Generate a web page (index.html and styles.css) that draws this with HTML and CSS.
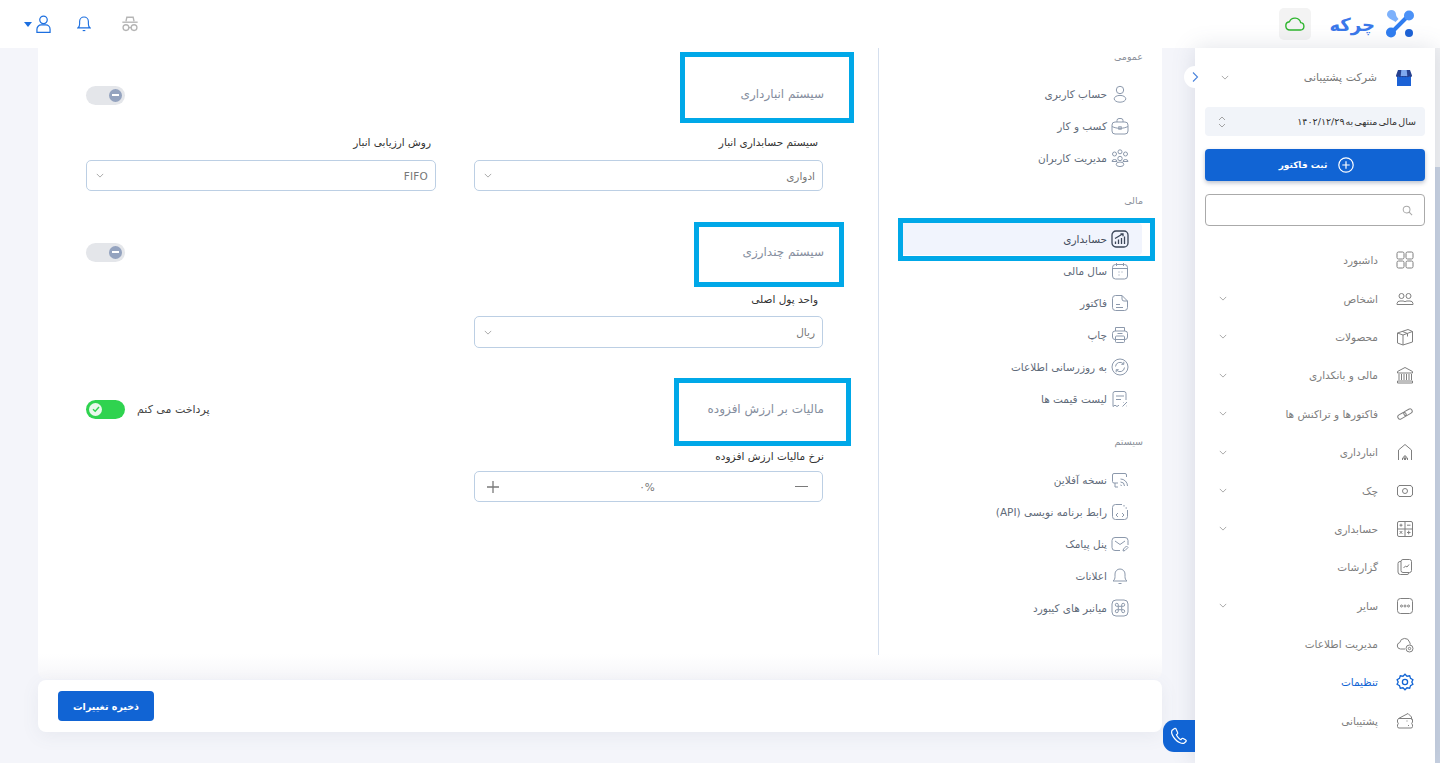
FILE: index.html
```html
<!DOCTYPE html>
<html lang="fa" dir="rtl">
<head>
<meta charset="utf-8">
<title>تنظیمات</title>
<link rel="stylesheet" href="styles.css">
</head>
<body>
<header class="topbar">
  <div class="brand-group">
    <svg class="logo" viewBox="0 0 28 28"><path d="M23 5 5 23" stroke="#2f7df0" stroke-width="4" stroke-linecap="round" fill="none"/><circle cx="23" cy="5.500" r="5" fill="#4c92f7"/><circle cx="5" cy="22.500" r="5" fill="#2f7df0"/><path d="M1 4.500a4.500 4.500 0 0 1 9 0c0 2 1.500 3 2.500 4.500l-3 3C6 9.500 1 8 1 4.500z" fill="#7db1fb"/><circle cx="23" cy="23" r="4" fill="#1c62d6"/></svg>
    <span class="wordmark">چرکه</span>
    <button class="cloud-btn"><svg viewBox="0 0 24 24" class="cloud-icon"><path d="M6.500 18.500a4.500 4.500 0 0 1-.6-8.960 6.500 6.500 0 0 1 12.300 1A4 4 0 0 1 18 18.500z" fill="none" stroke="#2db52d" stroke-width="1.500"/></svg></button>
  </div>
  <div class="tools">
    <svg class="tool-incognito" viewBox="0 0 20 20" fill="none" stroke="#b5b5b5" stroke-width="1.500"><path d="M5.500 7 6.500 2.500h7L14.500 7"/><path d="M1.500 8h17"/><circle cx="5.500" cy="14" r="3.200"/><circle cx="14.500" cy="14" r="3.200"/><path d="M8.700 14h2.600"/></svg>
    <svg class="tool-bell" viewBox="0 0 16 20" fill="none" stroke="#1c6fe0" stroke-width="1.300"><path d="M1 14.500c1.500-1 2-2.500 2-4.500V7a5 5 0 0 1 10 0v3c0 2 .5 3.500 2 4.500z"/><path d="M6.500 17.500h3"/></svg>
    <span class="user-menu">
      <svg class="tool-user" viewBox="0 0 16 20" fill="none" stroke="#1c6fe0" stroke-width="1.300"><circle cx="8" cy="5" r="4"/><path d="M1 18.500v-3.500a4.500 4.500 0 0 1 4.500-4.500h5A4.500 4.500 0 0 1 15 15v3.500z"/></svg>
      <i class="caret"></i>
    </span>
  </div>
</header>

<div class="shell">
  <div class="scrollbar"><div class="scroll-thumb"></div></div>

  <aside class="sidebar">
    <button class="collapse"><svg viewBox="0 0 10 12" class="collapse-icon"><path d="M3 1.500 7.500 6 3 10.500" fill="none" stroke="#4a84dc" stroke-width="1.100"/></svg></button>
    <div class="company">
      <svg class="store" viewBox="0 0 16 16"><rect x="1" y="5" width="14" height="11" fill="#1c62d6"/><path d="M2 0h12l2 5.500c0 1.800-2.500 2-2.700.6-.3 1.400-2.600 1.400-2.700 0-.1 1.400-2.500 1.400-2.600 0-.1 1.400-2.500 1.400-2.600 0-.2 1.400-2.600 1.400-2.700 0C2.500 7.500 0 7.300 0 5.500z" fill="#27418f"/><path d="M5.300 0h5.400l.6 6H4.700z" fill="#7fa8ee"/></svg>
      <span class="company-name">شرکت پشتیبانی</span>
      <svg class="chev" viewBox="0 0 10 6"><path d="M1 1l4 4 4-4" fill="none" stroke="#8a8a8a" stroke-width=".9"/></svg>
    </div>
    <div class="fiscal">
      <span>سال مالی منتهی به ۱۴۰۲/۱۲/۲۹</span>
      <svg class="updown" viewBox="0 0 8 12"><path d="M1 4l3-3 3 3M1 8l3 3 3-3" fill="none" stroke="#9a9a9a" stroke-width=".9"/></svg>
    </div>
    <button class="invoice-btn">
      <svg class="plus-circle" viewBox="0 0 16 16" fill="none" stroke="#fff" stroke-width="1.200"><circle cx="8" cy="8" r="7.200"/><path d="M8 4.300v7.400M4.300 8h7.400"/></svg>
      <span>ثبت فاکتور</span>
    </button>
    <div class="search">
      <svg class="search-icon" viewBox="0 0 12 12" fill="none" stroke="#a8a8a8" stroke-width="1.100"><circle cx="5" cy="5" r="3.700"/><path d="M7.800 7.800 11 11"/></svg>
    </div>
    <nav class="menu">
      <a class="menu-item"><svg class="mi" viewBox="0 0 18 18"><rect x="1" y="1" width="7" height="7" rx="1.500"/><rect x="10" y="1" width="7" height="7" rx="1.500"/><rect x="1" y="10" width="7" height="7" rx="1.500"/><rect x="10" y="10" width="7" height="7" rx="1.500"/></svg><span>داشبورد</span></a>
      <a class="menu-item"><svg class="mi" viewBox="0 0 18 18"><circle cx="5.500" cy="6" r="2.500"/><circle cx="12.500" cy="6" r="2.500"/><path d="M1 14.500v-1a3 3 0 0 1 3-2.500h3a3 3 0 0 1 2 .8 3 3 0 0 1 2-.8h3a3 3 0 0 1 3 2.500v1z"/></svg><span>اشخاص</span><svg class="chev" viewBox="0 0 10 6"><path d="M1 1l4 4 4-4"/></svg></a>
      <a class="menu-item"><svg class="mi" viewBox="0 0 18 18"><path d="M1.500 5 12 1.500l4.500 2v10.500L7 17l-5.500-2z"/><path d="M1.500 5 7 7v10M7 7l9.500-3.500M6 3.300l5.500 2.200v3"/></svg><span>محصولات</span><svg class="chev" viewBox="0 0 10 6"><path d="M1 1l4 4 4-4"/></svg></a>
      <a class="menu-item"><svg class="mi" viewBox="0 0 18 18"><path d="M1.500 5.500 9 1.500l7.500 4v1.500h-15z"/><path d="M3 8v6M5.500 8v6M8 8v6M10.500 8v6M13 8v6M15.500 8v6"/><path d="M1.500 15h15v2h-15z"/></svg><span>مالی و بانکداری</span><svg class="chev" viewBox="0 0 10 6"><path d="M1 1l4 4 4-4"/></svg></a>
      <a class="menu-item"><svg class="mi" viewBox="0 0 18 18"><rect x="1.500" y="8.500" width="9" height="4.600" rx="2.300" transform="rotate(-30 6 10.800)"/><rect x="7.500" y="5" width="9" height="4.600" rx="2.300" transform="rotate(-30 12 7.300)"/></svg><span>فاکتورها و تراکنش ها</span><svg class="chev" viewBox="0 0 10 6"><path d="M1 1l4 4 4-4"/></svg></a>
      <a class="menu-item"><svg class="mi" viewBox="0 0 18 18"><path d="M2.500 17V7L9 1.500 15.500 7v10"/><path d="M6.500 17v-2h2v2M9.500 17v-2h2v2M8 15v-2h2v2"/></svg><span>انبارداری</span><svg class="chev" viewBox="0 0 10 6"><path d="M1 1l4 4 4-4"/></svg></a>
      <a class="menu-item"><svg class="mi" viewBox="0 0 18 18"><path d="M3 3.500h12A1.500 1.500 0 0 0 16.500 5v8a1.500 1.500 0 0 0-1.500 1.500H3A1.500 1.500 0 0 0 1.500 13V5A1.500 1.500 0 0 0 3 3.500z"/><circle cx="9" cy="9" r="2.500"/></svg><span>چک</span><svg class="chev" viewBox="0 0 10 6"><path d="M1 1l4 4 4-4"/></svg></a>
      <a class="menu-item"><svg class="mi" viewBox="0 0 18 18"><rect x="1.500" y="1.500" width="15" height="15" rx="1.500"/><path d="M9 1.500v15M1.500 9h15M3.500 5.200h3M5 3.700v3M11 5.200h3.500M3.700 11l2.600 2.800M6.300 11l-2.600 2.800M11 12.500h3.500M12.700 10.700v3.600"/></svg><span>حسابداری</span><svg class="chev" viewBox="0 0 10 6"><path d="M1 1l4 4 4-4"/></svg></a>
      <a class="menu-item"><svg class="mi" viewBox="0 0 18 18"><path d="M5 3.500H4A2 2 0 0 0 2 5.500V14a2.500 2.500 0 0 0 2.500 2.500H11a2 2 0 0 0 2-1.500"/><rect x="5" y="1.500" width="10.500" height="13" rx="2"/><path d="M7.500 10l2-2 1.500 1 2-2.500"/></svg><span>گزارشات</span></a>
      <a class="menu-item"><svg class="mi" viewBox="0 0 18 18"><rect x="1.500" y="1.500" width="15" height="15" rx="3"/><circle cx="5.500" cy="9" r="1"/><circle cx="9" cy="9" r="1"/><circle cx="12.500" cy="9" r="1"/></svg><span>سایر</span><svg class="chev" viewBox="0 0 10 6"><path d="M1 1l4 4 4-4"/></svg></a>
      <a class="menu-item"><svg class="mi" viewBox="0 0 18 18"><path d="M9 14H4.500a3.300 3.300 0 0 1-.7-6.500A5 5 0 0 1 13.500 7a5 5 0 0 1 .8 2.500"/><circle cx="13.500" cy="13.500" r="3.500"/><circle cx="13.500" cy="13.500" r="1.200"/></svg><span>مدیریت اطلاعات</span></a>
      <a class="menu-item is-active"><svg class="mi" viewBox="0 0 18 18"><path d="M9 1.200l2 2 2.700-.4.800 2.600 2.400 1.300L15.800 9l1.100 2.300-2.400 1.300-.8 2.600-2.700-.4-2 2-2-2-2.700.4-.8-2.600L1.100 11.300 2.200 9 1.100 6.700l2.400-1.300.8-2.600 2.700.4z"/><circle cx="9" cy="9" r="2.600"/></svg><span>تنظیمات</span></a>
      <a class="menu-item"><svg class="mi" viewBox="0 0 18 18"><path d="M2.500 6.500 12 1.500l3.500 3.500v2.500"/><path d="M2.500 6.500h12.500a1.500 1.500 0 0 1 1.500 1.500v2l-.8 1.500.8 1.500v1.500a1.500 1.500 0 0 1-1.500 1.500H3a1.500 1.500 0 0 1-1.500-1.500v-1.500l.8-1.500-.8-1.500v-2z"/><path d="M11 8.500v1M12.500 13v1"/></svg><span>پشتیبانی</span></a>
    </nav>
  </aside>

  <main class="content">
    <div class="settings-card">
      <nav class="settings-nav">
        <div class="nav-label">عمومی</div>
        <a class="nav-item"><svg class="ni" viewBox="0 0 18 18"><circle cx="9" cy="5" r="3.700"/><ellipse cx="9" cy="13.800" rx="5.800" ry="3.400"/></svg><span>حساب کاربری</span></a>
        <a class="nav-item"><svg class="ni" viewBox="0 0 18 18"><rect x="1" y="5" width="16" height="12" rx="3"/><path d="M6 5V3.500A2 2 0 0 1 8 1.500h2a2 2 0 0 1 2 2V5M1 9.500c2.500 1.200 5 1.800 8 1.800s5.500-.6 8-1.800"/><rect x="7.800" y="9.800" width="2.400" height="2.400"/></svg><span>کسب و کار</span></a>
        <a class="nav-item"><svg class="ni" viewBox="0 0 18 18"><circle cx="9" cy="2.800" r="2"/><circle cx="3.500" cy="5" r="2"/><circle cx="14.500" cy="5" r="2"/><path d="M1 12.500a2.500 2 0 0 1 5 0zM12 12.500a2.500 2 0 0 1 5 0z"/><circle cx="9" cy="9.500" r="2.200"/><ellipse cx="9" cy="15.300" rx="3.800" ry="2.300"/></svg><span>مدیریت کاربران</span></a>

        <div class="nav-label nav-label-gap">مالی</div>
        <a class="nav-item is-current"><svg class="ni ni-dark" viewBox="0 0 18 18"><rect x="1" y="1" width="16" height="16" rx="4"/><path d="M4.500 14v-2.500M7.500 14v-4.500M10.500 14V8M13.500 14V6.500M4 8.500 11.500 4M9.500 3.800h2.500v2.500"/></svg><span>حسابداری</span><i class="annot annot-nav"></i></a>
        <a class="nav-item"><svg class="ni" viewBox="0 0 18 18"><rect x="1.500" y="2.500" width="15" height="14.500" rx="3"/><path d="M1.500 6.500h15M5.500 1v3M12.500 1v3M7.500 10h1M10.500 10h1M7.500 13h1"/></svg><span>سال مالی</span></a>
        <a class="nav-item"><svg class="ni" viewBox="0 0 18 18"><path d="M11 1.500H4.500a3 3 0 0 0-3 3v9a3 3 0 0 0 3 3h9a3 3 0 0 0 3-3V7z"/><path d="M11 1.500V5a2 2 0 0 0 2 2h3.500M5 10.500h4M5 13.500h7"/></svg><span>فاکتور</span></a>
        <a class="nav-item"><svg class="ni" viewBox="0 0 18 18"><path d="M4.500 5V1.500h9V5"/><rect x="1.500" y="5" width="15" height="8.500" rx="2.500"/><rect x="4.500" y="10" width="9" height="6.500" rx="1"/><path d="M6.500 7.500h5"/></svg><span>چاپ</span></a>
        <a class="nav-item"><svg class="ni" viewBox="0 0 18 18"><circle cx="9" cy="9" r="8"/><path d="M4.500 8.500a4.500 4.500 0 0 1 8-2.500M13.500 9.500a4.500 4.500 0 0 1-8 2.500M12.800 3.800V6.300h-2.500M5.200 14.200V11.700h2.500"/></svg><span>به روزرسانی اطلاعات</span></a>
        <a class="nav-item"><svg class="ni" viewBox="0 0 18 18"><path d="M2 16.500V3.500a2 2 0 0 1 2-2h9a2 2 0 0 1 2 2V10M2 16.500l2-1.300 2 1.300 2-1.300M5 6h8M5 9.500h5M11.500 16.500l4.500-4.500M12 12.500h.5M15.500 16h.5"/></svg><span>لیست قیمت ها</span></a>

        <div class="nav-label nav-label-gap">سیستم</div>
        <a class="nav-item"><svg class="ni" viewBox="0 0 18 18"><path d="M7 12H3a1.500 1.500 0 0 1-1.500-1.500V4A1.500 1.500 0 0 1 3 2.500h11A1.500 1.500 0 0 1 15.500 4v2"/><path d="M4 12v4h3M9.500 8a7 7 0 0 1 7 7M9.500 11a4 4 0 0 1 4 4M9.500 14a1 1 0 0 1 1 1"/></svg><span>نسخه آفلاین</span></a>
        <a class="nav-item"><svg class="ni" viewBox="0 0 18 18"><path d="M11 1.500H4.500a3 3 0 0 0-3 3v9a3 3 0 0 0 3 3h9a3 3 0 0 0 3-3V7"/><path d="M7 10 5 12l2 2M11 10l2 2-2 2M13 2v1.500M16 5h-1.500"/></svg><span>رابط برنامه نویسی (API)</span></a>
        <a class="nav-item"><svg class="ni" viewBox="0 0 18 18"><path d="M9 15.500H4a3 3 0 0 1-3-3v-7a3 3 0 0 1 3-3h10a3 3 0 0 1 3 3V10"/><path d="M4 6l5 3.500L14 6M12 16l.5-2 3-3 1.500 1.500-3 3z"/></svg><span>پنل پیامک</span></a>
        <a class="nav-item"><svg class="ni" viewBox="0 0 18 18"><path d="M2 14c1.500-1 2-2.500 2-4.500V7a5 5 0 0 1 10 0v2.500c0 2 .5 3.500 2 4.500zM7.500 16.500h3"/></svg><span>اعلانات</span></a>
        <a class="nav-item"><svg class="ni" viewBox="0 0 18 18"><rect x="1" y="1" width="16" height="16" rx="4"/><path d="M7.300 7.300h3.400v3.400H7.300zM7.300 7.300H5.800a1.500 1.500 0 1 1 1.500-1.500zM10.700 7.300V5.800a1.500 1.500 0 1 1 1.500 1.500zM7.300 10.700v1.500a1.500 1.500 0 1 1-1.500-1.500zM10.700 10.700h1.500a1.500 1.500 0 1 1-1.500 1.500z"/></svg><span>میانبر های کیبورد</span></a>
      </nav>

      <div class="form">
        <section class="section section-stock">
          <div class="sec-head">
            <h2 class="sec-title">سیستم انبارداری</h2>
            <span class="toggle"><i class="knob"><b class="minus"></b></i></span>
            <i class="annot annot-stock"></i>
          </div>
          <div class="fields">
            <div class="group">
              <label class="label label-inset">سیستم حسابداری انبار</label>
              <div class="field"><span>ادواری</span><svg class="chev" viewBox="0 0 10 6"><path d="M1 1l4 4 4-4"/></svg></div>
            </div>
            <div class="group">
              <label class="label label-inset">روش ارزیابی انبار</label>
              <div class="field"><span class="latin">FIFO</span><svg class="chev" viewBox="0 0 10 6"><path d="M1 1l4 4 4-4"/></svg></div>
            </div>
          </div>
        </section>

        <section class="section section-currency">
          <div class="sec-head">
            <h2 class="sec-title">سیستم چندارزی</h2>
            <span class="toggle"><i class="knob"><b class="minus"></b></i></span>
            <i class="annot annot-currency"></i>
          </div>
          <div class="fields">
            <div class="group">
              <label class="label label-inset">واحد پول اصلی</label>
              <div class="field"><span>ریال</span><svg class="chev" viewBox="0 0 10 6"><path d="M1 1l4 4 4-4"/></svg></div>
            </div>
          </div>
        </section>

        <section class="section section-tax">
          <div class="sec-head">
            <h2 class="sec-title">مالیات بر ارزش افزوده</h2>
            <span class="pay-text">پرداخت می کنم</span>
            <span class="toggle toggle-on"><i class="knob"><svg viewBox="0 0 10 10" class="check"><path d="M2 5.200 4.200 7.300 8 3" fill="none" stroke="#2fd34f" stroke-width="1.400"/></svg></i></span>
            <i class="annot annot-tax"></i>
          </div>
          <div class="fields">
            <div class="group">
              <label class="label label-flush">نرخ مالیات ارزش افزوده</label>
              <div class="field field-num"><b class="num-minus"></b><span>۰%</span><svg class="num-plus" viewBox="0 0 12 12"><path d="M6 0v12M0 6h12" stroke="#7a7a7a" stroke-width="1.300"/></svg></div>
            </div>
          </div>
        </section>
      </div>
    </div>

    <div class="save-bar"><button class="save-btn">ذخیره تغییرات</button></div>
  </main>

  <button class="phone"><svg viewBox="0 0 18 18" class="phone-icon"><path d="M4.500 1.500 2.200 3.200C1 5 2.500 9 5 12c2.500 3 6.500 5 9 4.300l2-1.800c.4-.5.3-1-.2-1.400l-2.600-1.600c-.5-.3-1-.2-1.400.2l-.9 1c-1.500-.5-4-3.300-4.500-5l1-.8c.4-.4.5-.9.2-1.400L5.900 1.700c-.4-.5-1-.6-1.400-.2z" fill="none" stroke="#fff" stroke-width="1.200"/></svg></button>
</div>
</body>
</html>
```

FILE: styles.css
```css
* { box-sizing: border-box; }
html, body { margin: 0; height: 763px; overflow: hidden; }
body {
  font-family: "DejaVu Sans", "Noto Sans", sans-serif;
  font-size: 10.5px;
  color: #444;
  background: #f4f5fa;
}
button { font: inherit; border: 0; padding: 0; cursor: pointer; }
i, b { display: block; font-style: normal; }

/* top bar */
.topbar {
  height: 48px;
  background: #fff;
  display: flex;
  align-items: center;
  justify-content: space-between;
  padding: 0 26px 0 24px;
}
.brand-group { display: flex; align-items: center; }
.logo { width: 28px; height: 28px; }
.wordmark {
  font-size: 18px;
  font-weight: 700;
  color: #3a78ea;
  width: 44px;
  margin-right: 11px;
  white-space: nowrap;
}
.cloud-btn {
  width: 32px;
  height: 32px;
  margin-right: 20px;
  border-radius: 5px;
  background: #f3f3f3;
  display: flex;
  align-items: center;
  justify-content: center;
}
.cloud-icon { width: 22px; height: 22px; }
.tools { display: flex; align-items: center; }
.tool-incognito { width: 18px; height: 18px; }
.tool-bell { width: 14px; height: 18px; margin-right: 30px; }
.user-menu { display: flex; align-items: center; margin-right: 26px; gap: 4px; }
.tool-user { width: 15px; height: 19px; }
.caret {
  width: 0;
  height: 0;
  border: 4px solid transparent;
  border-top: 5px solid #1c6fe0;
  border-bottom: 0;
}

/* shell */
.shell { display: flex; height: 715px; position: relative; }
.scrollbar {
  width: 5px;
  background: #f1f2f4;
  padding-top: 119px;
  flex: none;
}
.scroll-thumb { height: 100%; background: #c8d2e2; }

/* sidebar */
.sidebar {
  width: 240px;
  flex: none;
  background: #fff;
  position: relative;
  box-shadow: 0 0 22px rgba(90, 100, 130, .18);
}
.collapse {
  position: absolute;
  top: 18px;
  right: 229px;
  width: 22px;
  height: 22px;
  border-radius: 50%;
  background: #fff;
  display: flex;
  align-items: center;
  justify-content: center;
}
.collapse-icon { width: 10px; height: 12px; }
.company {
  height: 59px;
  display: flex;
  align-items: center;
  padding: 0 23px 0 26px;
  color: #777;
}
.store { width: 16px; height: 16px; flex: none; }
.company-name { margin-right: 19px; font-size: 11px; }
.chev {
  width: 8px;
  height: 5px;
  flex: none;
  margin-right: auto;
  fill: none;
  stroke: #8a8a8a;
  stroke-width: .9;
}
.fiscal {
  height: 29px;
  margin: 0 10px;
  padding: 0 9px 0 13px;
  border-radius: 4px;
  background: #f1f4f9;
  display: flex;
  align-items: center;
  justify-content: space-between;
  color: #333;
  font-size: 9.5px;
  word-spacing: -2px;
}
.updown { width: 8px; height: 12px; }
.invoice-btn {
  width: 220px;
  height: 32px;
  margin: 13px 10px 0;
  padding-left: 3px;
  border-radius: 4px;
  background: #1164d4;
  color: #fff;
  font-weight: 700;
  font-size: 9px;
  display: flex;
  align-items: center;
  justify-content: center;
  gap: 11px;
  box-shadow: 0 2px 4px rgba(30, 50, 90, .3);
}
.plus-circle { width: 16px; height: 16px; }
.search {
  height: 32px;
  margin: 13px 10px 0;
  border: 1px solid #aaa;
  border-radius: 4px;
  display: flex;
  align-items: center;
  padding-right: 11px;
}
.search-icon { width: 11px; height: 11px; }
.menu { margin-top: 15px; }
.menu-item {
  height: 38.4px;
  display: flex;
  align-items: center;
  padding: 0 21px 0 24px;
  color: #7d7d7d;
  font-size: 10.5px;
}
.menu-item span { margin-right: 18px; }
.mi {
  width: 18px;
  height: 18px;
  flex: none;
  fill: none;
  stroke: #7f7f7f;
  stroke-width: 1;
}
.is-active { color: #1164d4; }
.is-active .mi { stroke: #1164d4; stroke-width: 1.300; }

/* content */
.content { flex: 1; padding: 0 33px 0 38px; min-width: 0; }
.settings-card {
  height: 631px;
  display: flex;
  background: linear-gradient(#fff 606px, #f6f6f9);
  border-radius: 0 0 8px 8px;
}
.settings-nav {
  width: 284px;
  height: 607px;
  flex: none;
  border-left: 1px solid #d5dfee;
}
.nav-label {
  height: 18px;
  line-height: 18px;
  padding-right: 19px;
  color: #8a8f99;
  font-size: 9.5px;
  margin-bottom: 12px;
}
.nav-label-gap { margin-top: 18px; margin-bottom: 13px; }
.nav-item {
  height: 32px;
  margin: 0 20px 0 20px;
  padding-right: 13px;
  display: flex;
  align-items: center;
  gap: 4px;
  color: #5f6b7a;
  font-size: 10.5px;
  border-radius: 4px;
  position: relative;
}
.ni {
  width: 18px;
  height: 18px;
  flex: none;
  fill: none;
  stroke: #8c99ac;
  stroke-width: 1;
}
.ni-dark { stroke: #3b4658; stroke-width: 1.300; }
.is-current { background: #f1f4fd; color: #444d5c; }

/* form */
.form { flex: 1; padding: 0 54px 0 48px; min-width: 0; }
.section { padding-top: 36px; }
.section-currency { padding-top: 51px; }
.section-tax { padding-top: 51px; }
.sec-head {
  height: 20px;
  display: flex;
  align-items: center;
  position: relative;
  margin-bottom: 30px;
}
.section-currency .sec-head { margin-bottom: 29px; }
.section-tax .sec-head { margin-bottom: 29px; }
.sec-title {
  margin: 0;
  font-size: 12px;
  font-weight: 400;
  color: #858e9e;
}
.toggle {
  width: 39px;
  height: 19px;
  margin-right: auto;
  border-radius: 10px;
  background: #e4e6ea;
  display: flex;
  align-items: center;
  justify-content: flex-end;
  padding: 0 3px;
  direction: ltr;
}
.section-stock .toggle { margin-top: 2px; }
.knob {
  width: 13px;
  height: 13px;
  border-radius: 50%;
  background: #94a3bf;
  display: flex;
  align-items: center;
  justify-content: center;
}
.minus { width: 7px; height: 1.500px; background: #fff; }
.toggle-on {
  margin-right: 12px;
  background: #2fd34f;
  justify-content: flex-start;
}
.toggle-on .knob { background: #eaf8ec; }
.check { width: 10px; height: 10px; }
.pay-text { margin-right: auto; color: #444; font-size: 11px; }
.fields {
  display: grid;
  grid-template-columns: 349px 350px;
  column-gap: 38px;
  margin-right: 1px;
}
.group { min-width: 0; }
.label {
  display: block;
  height: 16px;
  line-height: 16px;
  margin-bottom: 10px;
  color: #333;
  font-size: 10.5px;
}
.section-currency .label { margin-bottom: 9px; }
.section-tax .label { margin-bottom: 7px; }
.label-inset { padding-right: 5px; }
.label-flush { margin-right: -1px; }
.field {
  height: 31px;
  border: 1px solid #bccfe4;
  border-radius: 5px;
  display: flex;
  align-items: center;
  padding: 0 7px 0 9px;
  color: #777;
  font-size: 10.5px;
}
.section-currency .field { height: 32px; }
.latin { letter-spacing: .2px; }
.field-num { justify-content: space-between; padding: 0 14px 0 12px; }
.num-minus { width: 13px; height: 1.500px; background: #7a7a7a; }
.num-plus { width: 12px; height: 12px; }
.save-bar {
  height: 52px;
  margin-top: 1px;
  background: #fff;
  border-radius: 8px;
  display: flex;
  align-items: center;
  justify-content: flex-end;
  padding: 0 20px;
  box-shadow: 0 4px 18px rgba(90, 100, 130, .08);
}
.save-btn {
  width: 96px;
  height: 30px;
  border-radius: 4px;
  background: #1164d4;
  color: #fff;
  font-size: 9.5px;
  font-weight: 700;
}

/* annotation frames over the screenshot */
.annot {
  position: absolute;
  border: 5px solid #00a8e8;
  pointer-events: none;
}
.annot-stock { top: -32px; right: -30px; width: 174px; height: 71px; }
.annot-currency { top: -20px; right: -20px; width: 150px; height: 65px; }
.annot-tax { top: -21px; right: -27px; width: 177px; height: 68px; }
.annot-nav { top: -5px; right: -13px; width: 257px; height: 43px; }

/* phone */
.phone {
  position: absolute;
  top: 672px;
  right: 245px;
  width: 32px;
  height: 32px;
  background: #1164d4;
  border-radius: 11px 0 0 11px;
  display: flex;
  align-items: center;
  justify-content: center;
}
.phone-icon { width: 18px; height: 18px; }
```
